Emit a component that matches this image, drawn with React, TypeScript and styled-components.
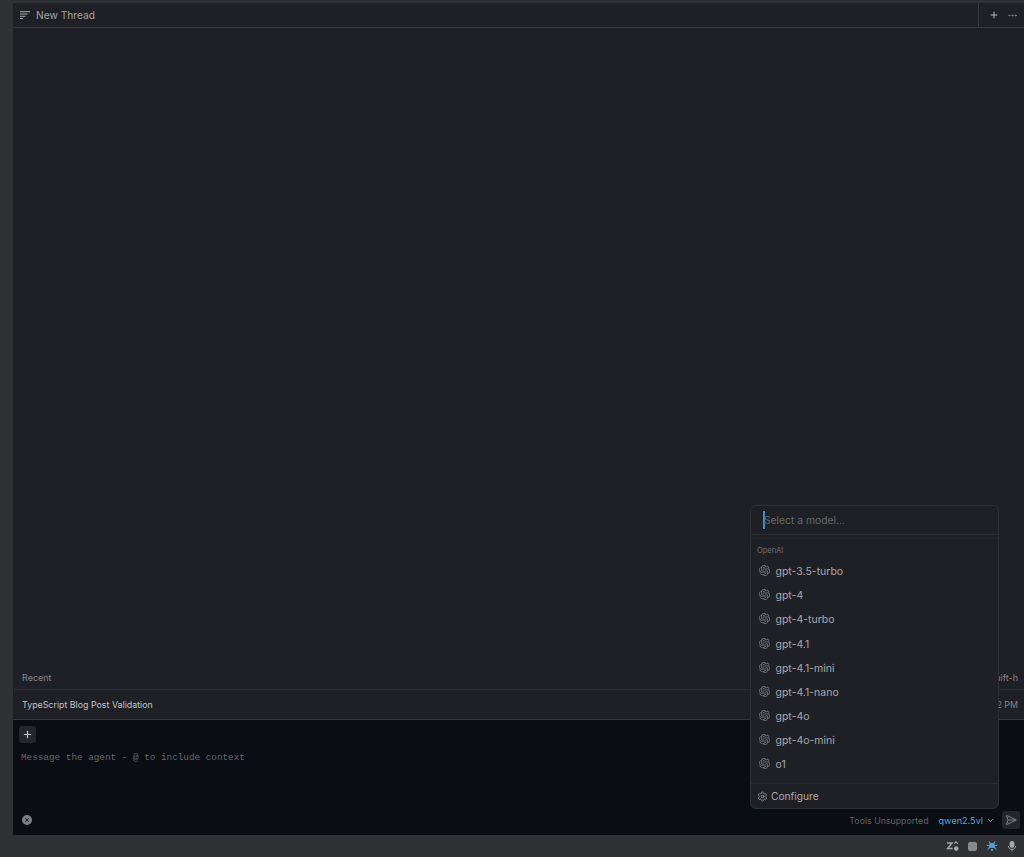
import { createGlobalStyle, styled } from "styled-components";
import { SiOpenai } from "react-icons/si";
import { ChevronDown, Ellipsis, Plus, SendHorizontal, Settings, X } from "lucide-react";

const models = [
  "gpt-3.5-turbo",
  "gpt-4",
  "gpt-4-turbo",
  "gpt-4.1",
  "gpt-4.1-mini",
  "gpt-4.1-nano",
  "gpt-4o",
  "gpt-4o-mini",
  "o1",
];

export default function App() {
  return (
    <>
      <GlobalStyle />
      <Page>
        <Workspace>
          <Header>
            <ThreadIcon viewBox="0 0 10 8" width="10" height="8">
              <path d="M0 .7h10M0 3h7.5M0 5.3h5.5M0 7.5h3" stroke="#a8a9ac" strokeWidth="1" />
            </ThreadIcon>
            <Title>New Thread</Title>
            <HeaderActions>
              <Plus size={10} strokeWidth={2.4} color="#b8b9bc" />
              <Ellipsis size={11} strokeWidth={2} color="#8f9093" />
            </HeaderActions>
          </Header>

          <Thread />

          <RecentHead>
            <span>Recent</span>
            <span>cmd-shift-h</span>
          </RecentHead>
          <RecentRow>
            <span>TypeScript Blog Post Validation</span>
            <RecentTime>Today 12:22 PM</RecentTime>
          </RecentRow>

          <Composer>
            <AddButton>
              <Plus size={11} strokeWidth={2.4} color="#c4c6ca" />
            </AddButton>
            <Placeholder>Message the agent - @ to include context</Placeholder>
            <ComposerFooter>
              <ProfileBadge>
                <X size={6} strokeWidth={4} color="#14161b" />
              </ProfileBadge>
              <ToolsNote>Tools Unsupported</ToolsNote>
              <ModelName>qwen2.5vl</ModelName>
              <ChevronDown size={9} strokeWidth={2.6} color="#56a6dc" />
              <SendButton>
                <SendHorizontal size={12} strokeWidth={1.8} color="#8d8f93" />
              </SendButton>
            </ComposerFooter>
          </Composer>
        </Workspace>

        <StatusBar>
          <svg viewBox="0 0 13 12" width="13" height="12">
            <path d="M1 3h5L1.6 8.6h5" fill="none" stroke="#a4a6a9" strokeWidth="1.5" />
            <path d="M8.2 3.6 10 1.8l1.8 1.8" fill="none" stroke="#a4a6a9" strokeWidth="1.1" />
            <circle cx="10.2" cy="8.6" r="2.3" fill="#a4a6a9" />
          </svg>
          <StopSquare />
          <svg viewBox="0 0 12 12" width="12" height="12">
            <path
              d="M3.2 1.2 4.6 3h2.8l1.4-1.8.7.6L8.4 3.8l.5 1.2h2.3v1H8.9v1l1.8 2-.7.7L8 8H4l-2 1.7-.7-.7 1.8-2V6H.8V5h2.3l.5-1.2L2.5 1.8z"
              fill="#4f9fd6"
            />
            <path d="M5 11h2v-2H5z" fill="#4f9fd6" />
          </svg>
          <MicIcon viewBox="0 0 10 12" width="10" height="12">
            <rect x="2.6" y="1" width="4.8" height="7" rx="2.4" fill="#a4a6a9" />
            <path d="M1.4 6c0 2 1.6 3.4 3.6 3.4S8.6 8 8.6 6M5 9.4V11.4" fill="none" stroke="#a4a6a9" />
          </MicIcon>
        </StatusBar>

        <ModelPopover>
          <SearchRow>
            <Caret />
            <SearchText>Select a model...</SearchText>
          </SearchRow>
          <ModelList>
            <GroupLabel>OpenAI</GroupLabel>
            {models.map((model) => (
              <ModelRow key={model}>
                <ModelIcon size={11} />
                <span>{model}</span>
              </ModelRow>
            ))}
            <ModelRow>
              <ModelIcon size={11} />
            </ModelRow>
          </ModelList>
          <PopoverFooter>
            <Settings size={11} strokeWidth={1.6} color="#a0a1a5" />
            <span>Configure</span>
          </PopoverFooter>
        </ModelPopover>
      </Page>
    </>
  );
}

const GlobalStyle = createGlobalStyle`
  html, body {
    margin: 0;
    padding: 0;
    background: #303134;
    overflow: hidden;
  }
  body {
    font-family: Inter, "Noto Sans", sans-serif;
  }
  * {
    box-sizing: border-box;
  }
`;

const Page = styled.div`
  position: relative;
  display: flex;
  flex-direction: column;
  width: 1024px;
  height: 857px;
  padding-top: 3px;
`;

const Workspace = styled.main`
  flex: 1;
  min-height: 0;
  margin-left: 13px;
  display: flex;
  flex-direction: column;
  background: #1f2025;
`;

const Header = styled.header`
  flex: none;
  height: 25px;
  display: flex;
  align-items: center;
  padding-left: 7px;
  border-bottom: 1px solid #36373b;
`;

const ThreadIcon = styled.svg`
  flex: none;
`;

const Title = styled.h1`
  margin: 0 0 0 6px;
  font-size: 10.2px;
  font-weight: 400;
  color: #a3a4a8;
`;

const HeaderActions = styled.div`
  margin-left: auto;
  width: 46px;
  height: 100%;
  display: flex;
  align-items: center;
  justify-content: space-between;
  padding: 0 6px 0 10px;
  border-left: 1px solid #36373b;
`;

const Thread = styled.div`
  flex: 1;
  min-height: 0;
`;

const RecentHead = styled.div`
  flex: none;
  height: 26px;
  margin-left: 1px;
  display: flex;
  align-items: flex-end;
  justify-content: space-between;
  padding: 0 6px 6px 8px;
  font-size: 9px;
  color: #85868a;
  border-bottom: 1px solid #2b2c30;
`;

const RecentRow = styled.div`
  flex: none;
  height: 30px;
  display: flex;
  align-items: center;
  justify-content: space-between;
  padding: 0 6px 1px 9px;
  font-size: 8.85px;
  color: #c2c3c6;
  border-bottom: 1px solid #36373b;
`;

const RecentTime = styled.span`
  color: #85868a;
`;

const Composer = styled.section`
  flex: none;
  height: 115px;
  display: flex;
  flex-direction: column;
  padding: 6px 4px 6px 6px;
  background: #0a0d14;
`;

const AddButton = styled.button`
  width: 17px;
  height: 17px;
  padding: 0;
  display: flex;
  align-items: center;
  justify-content: center;
  background: #24262c;
  border: none;
  border-radius: 3px;
`;

const Placeholder = styled.div`
  margin: 7px 0 0 2px;
  font-family: "Liberation Mono", monospace;
  font-size: 9.33px;
  line-height: 16px;
  color: #66686c;
`;

const ComposerFooter = styled.div`
  margin-top: auto;
  display: flex;
  align-items: center;
`;

const ProfileBadge = styled.div`
  width: 10px;
  height: 10px;
  margin-left: 3px;
  display: flex;
  align-items: center;
  justify-content: center;
  border-radius: 50%;
  background: #7d7f83;
`;

const ToolsNote = styled.span`
  margin-left: auto;
  font-size: 8.8px;
  color: #5f6165;
`;

const ModelName = styled.span`
  margin: 0 3px 0 10px;
  font-size: 9.1px;
  color: #56a6dc;
`;

const SendButton = styled.button`
  width: 18px;
  height: 18px;
  margin-left: 7px;
  padding: 0;
  display: flex;
  align-items: center;
  justify-content: center;
  background: #24262c;
  border: none;
  border-radius: 3px;
`;

const StatusBar = styled.footer`
  flex: none;
  height: 22px;
  display: flex;
  align-items: center;
  justify-content: flex-end;
  gap: 9px;
  padding-right: 7px;
  background: #303134;
`;

const StopSquare = styled.div`
  width: 9px;
  height: 9px;
  border-radius: 2px;
  background: #88898c;
`;

const MicIcon = styled.svg`
  flex: none;
`;

const ModelPopover = styled.div`
  position: absolute;
  left: 750px;
  top: 505px;
  width: 249px;
  height: 304px;
  display: flex;
  flex-direction: column;
  background: #1f2025;
  border: 1px solid #2e2f33;
  border-radius: 6px;
  overflow: hidden;
`;

const SearchRow = styled.div`
  flex: none;
  height: 29px;
  display: flex;
  align-items: center;
  padding-left: 12px;
  border-bottom: 1px solid #2b2c30;
`;

const Caret = styled.span`
  flex: none;
  width: 2px;
  height: 18px;
  background: #3a8fd0;
`;

const SearchText = styled.span`
  margin-left: -1px;
  font-size: 10.3px;
  color: #66686c;
`;

const ModelList = styled.div`
  flex: 1;
  min-height: 0;
  overflow: hidden;
  margin-top: 3px;
  border-top: 1px dotted #2b2c30;
`;

const GroupLabel = styled.div`
  height: 20.4px;
  padding: 6px 0 0 6px;
  font-size: 7.5px;
  line-height: 12px;
  color: #6f7074;
`;

const ModelRow = styled.div`
  height: 24.2px;
  display: flex;
  align-items: center;
  gap: 6px;
  padding-left: 7.5px;
  font-size: 10.5px;
  color: #a7a8ab;
`;

const ModelIcon = styled(SiOpenai)`
  flex: none;
  margin-top: -2px;
  color: #77787c;
`;

const PopoverFooter = styled.div`
  flex: none;
  height: 25px;
  display: flex;
  align-items: center;
  gap: 3px;
  padding-left: 6px;
  font-size: 10.2px;
  color: #a7a8ab;
  border-top: 1px solid #2b2c30;
`;
